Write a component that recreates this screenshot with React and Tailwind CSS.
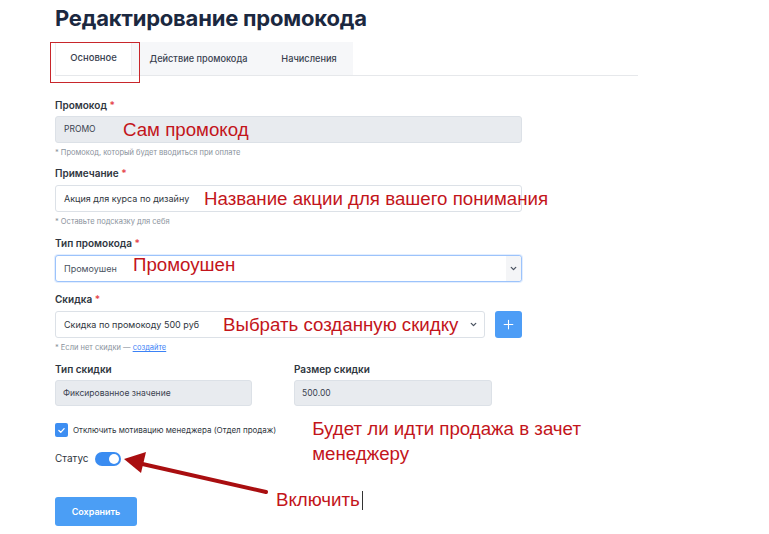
import React from 'react';

const ui = { fontFamily: 'Inter, "Noto Sans", sans-serif' };
const note = { fontFamily: '"Liberation Sans", Arial, sans-serif' };

// --- мелкие части формы ---
const Label = ({ children, req }) => (
  <div className="text-[10px] font-semibold text-[#2f3640] leading-[14px]">
    {children}
    {req && <span className="text-[#e5484d]"> *</span>}
  </div>
);

const Hint = ({ children }) => (
  <div className="text-[7.5px] text-[#8a929c] leading-[10px] mt-[5px]">{children}</div>
);

const Note = ({ children, className = '' }) => (
  <span className={`shrink-0 text-[18.7px] leading-[20px] text-[#c3151b] whitespace-nowrap ${className}`} style={note}>
    {children}
  </span>
);

const Chevron = () => (
  <svg width="9" height="9" viewBox="0 0 24 24" fill="none" stroke="#4a5361" strokeWidth="3.5" strokeLinecap="round" strokeLinejoin="round">
    <path d="M6 9l6 6 6-6" />
  </svg>
);

export default function App() {
  return (
    <div className="relative w-[769px] h-[534px] bg-white overflow-hidden" style={ui}>
      <div className="pl-[55px] pt-[3px] w-[638px]">
        <h1 className="text-[22px] font-bold leading-[30px] text-[#1b2840] tracking-[-0.2px]">Редактирование промокода</h1>

        {/* Вкладки */}
        <div className="mt-[9px] flex border-b border-[#e6e8eb] h-[34px]">
          <div className="relative w-[77px] bg-white border-l border-r border-[#eceef1] flex items-center justify-center text-[9.5px] font-medium text-[#3a4250]">
            Основное
            <div className="absolute left-[-6px] top-0 w-[90px] h-[41px] border-[1.5px] border-[#c8262b]" />
          </div>
          <div className="flex bg-[#f6f7f9] w-[221px] h-[33px]">
            <div className="w-[133px] flex items-center justify-center text-[9.2px] font-medium text-[#3a4250]">Действие промокода</div>
            <div className="w-[88px] flex items-center justify-center text-[9.2px] font-medium text-[#3a4250]">Начисления</div>
          </div>
        </div>

        {/* Форма */}
        <div className="w-[467px] mt-[22px]">
          <Label req>Промокод</Label>
          <div className="mt-[4px] h-[27px] rounded-[3px] bg-[#e8ebef] border border-[#dce1e7] flex items-center pl-[8px]">
            <span className="shrink-0 text-[8.5px] text-[#3a4250] w-[59px]">PROMO</span>
            <Note>Сам промокод</Note>
          </div>
          <Hint>* Промокод, который будет вводиться при оплате</Hint>

          <div className="mt-[8px]">
            <Label req>Примечание</Label>
          </div>
          <div className="mt-[5px] h-[27px] rounded-[3px] bg-white border border-[#dce1e7] flex items-center pl-[8px]">
            <span className="shrink-0 text-[9px] text-[#2f3640] w-[140px]">Акция для курса по дизайну</span>
            <Note>Название акции для вашего понимания</Note>
          </div>
          <Hint>* Оставьте подсказку для себя</Hint>

          <div className="mt-[9px]">
            <Label req>Тип промокода</Label>
          </div>
          <div className="mt-[5px] h-[27px] rounded-[3px] bg-white border border-[#9cc3fb] shadow-[0_0_0_1px_#e3eefe] flex items-center pl-[8px]">
            <span className="shrink-0 text-[9px] text-[#4a5361] w-[69px]">Промоушен</span>
            <Note className="-mt-[7px]">Промоушен</Note>
            <div className="ml-auto h-full w-[15px] bg-[#f4f5f7] flex items-center justify-center rounded-r-[3px]">
              <Chevron />
            </div>
          </div>

          <div className="mt-[10px]">
            <Label req>Скидка</Label>
          </div>
          <div className="mt-[5px] flex gap-[10px]">
            <div className="flex-1 h-[27px] rounded-[3px] bg-white border border-[#dce1e7] flex items-center pl-[8px] pr-[6px]">
              <span className="shrink-0 text-[9px] text-[#2f3640] w-[159px]">Скидка по промокоду 500 руб</span>
              <Note>Выбрать созданную скидку</Note>
              <div className="ml-auto"><Chevron /></div>
            </div>
            <button className="w-[27px] h-[27px] rounded-[3px] bg-[#4d9df6] flex items-center justify-center">
              <svg width="13" height="13" viewBox="0 0 24 24" fill="none" stroke="white" strokeWidth="2" strokeLinecap="round">
                <path d="M12 4v16M4 12h16" />
              </svg>
            </button>
          </div>
          <Hint>
            * Если нет скидки — <span className="text-[#3b82f6] underline">создайте</span>
          </Hint>

          <div className="mt-[9px] flex gap-[42px]">
            <div className="w-[197px]">
              <Label>Тип скидки</Label>
              <div className="mt-[4px] h-[26px] rounded-[3px] bg-[#e8ebef] border border-[#dce1e7] flex items-center pl-[7px] text-[8.5px] text-[#3a4250]">
                Фиксированное значение
              </div>
            </div>
            <div className="w-[198px]">
              <Label>Размер скидки</Label>
              <div className="mt-[4px] h-[26px] rounded-[3px] bg-[#e8ebef] border border-[#dce1e7] flex items-center pl-[7px] text-[8.5px] text-[#3a4250]">
                500.00
              </div>
            </div>
          </div>

          {/* Чекбокс */}
          <div className="mt-[15px] flex items-start">
            <div className="shrink-0 mt-[2px] w-[13px] h-[14px] rounded-[2px] bg-[#3d8ef2] flex items-center justify-center">
              <svg width="9" height="9" viewBox="0 0 24 24" fill="none" stroke="white" strokeWidth="3.5" strokeLinecap="round" strokeLinejoin="round">
                <path d="M5 12l5 5 9-10" />
              </svg>
            </div>
            <span className="ml-[5px] mt-[3px] text-[8px] text-[#2f3640] leading-[12px] whitespace-nowrap">Отключить мотивацию менеджера (Отдел продаж)</span>
            <div className="ml-[36px] -mt-[5px] text-[18.7px] leading-[25px] text-[#c3151b] whitespace-nowrap" style={note}>
              Будет ли идти продажа в зачет<br />менеджеру
            </div>
          </div>

          {/* Статус */}
          <div className="-mt-[15px] flex items-center gap-[6px]">
            <span className="text-[10px] text-[#2f3640]">Статус</span>
            <div className="w-[26px] h-[14px] rounded-full bg-[#3a8cf1] flex items-center justify-end pr-[2px]">
              <div className="w-[10px] h-[10px] rounded-full bg-white" />
            </div>
          </div>

          {/* Сохранить */}
          <div className="mt-[31px] flex items-start">
            <button className="w-[82px] h-[29px] rounded-[3px] bg-[#4b9ef5] text-white text-[9px] font-semibold">Сохранить</button>
            <div className="ml-[139px] -mt-[7px] flex items-center">
              <Note>Включить</Note>
              <span className="ml-[2px] w-[1px] h-[19px] bg-[#333]" />
            </div>
          </div>
        </div>
      </div>

      {/* Стрелка-указатель */}
      <svg className="absolute left-0 top-0 pointer-events-none" width="769" height="534">
        <line x1="266" y1="492" x2="138" y2="463" stroke="#a90e10" strokeWidth="4" strokeLinecap="round" />
        <polygon points="124,459 146,452 141,473" fill="#a90e10" />
      </svg>
    </div>
  );
}
